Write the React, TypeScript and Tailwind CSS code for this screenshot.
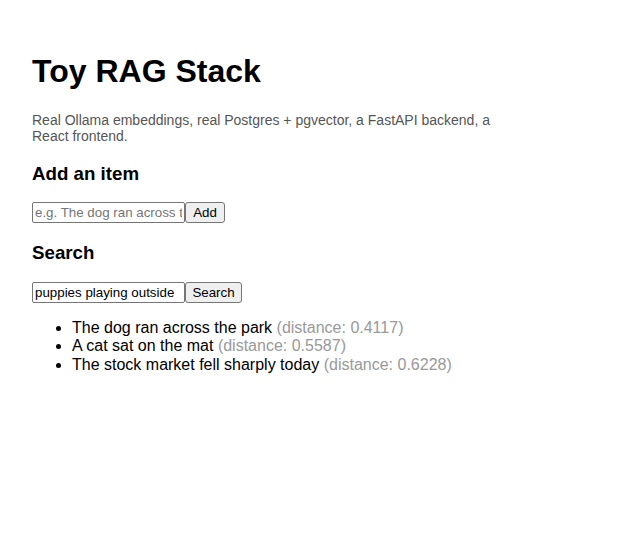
import { useState } from "react";

type Hit = { text: string; distance: number };

const results: Hit[] = [
  { text: "The dog ran across the park", distance: 0.4117 },
  { text: "A cat sat on the mat", distance: 0.5587 },
  { text: "The stock market fell sharply today", distance: 0.6228 },
];

export default function App() {
  const [item, setItem] = useState("");
  const [query, setQuery] = useState("puppies playing outside");

  const inputCls =
    "block w-[153px] h-[21px] px-[2px] border border-[#767676] rounded-[2px] bg-white text-[13.33px] text-black placeholder:text-[#757575] outline-none";
  const buttonCls =
    "block h-[21px] px-0 text-center border border-[#767676] rounded-[3px] bg-[#efefef] text-[13.33px] text-black";

  return (
    <div className="min-h-[560px] bg-white p-8 font-['Liberation_Sans',Arial,sans-serif] text-black">
      <div className="max-w-[480px]">
        <h1 className="mt-[21.44px] mb-[21.44px] text-[32px] leading-[36.8px] font-bold">Toy RAG Stack</h1>
        <p className="text-[14px] leading-[16.1px] text-[#555]">
          Real Ollama embeddings, real Postgres + pgvector, a FastAPI backend, a React frontend.
        </p>

        <h3 className="mt-[18.72px] mb-[17.72px] text-[18.72px] leading-[21.5px] font-bold">Add an item</h3>
        <div className="flex">
          <input
            className={inputCls}
            placeholder="e.g. The dog ran across the park"
            value={item}
            onChange={(e) => setItem(e.target.value)}
          />
          <button className={`${buttonCls} w-[40px]`}>Add</button>
        </div>

        <h3 className="mt-[18.72px] mb-[18.72px] text-[18.72px] leading-[21.5px] font-bold">Search</h3>
        <div className="flex">
          <input className={inputCls} value={query} onChange={(e) => setQuery(e.target.value)} />
          <button className={`${buttonCls} w-[57px]`}>Search</button>
        </div>

        <ul className="mt-4 list-disc pl-10 text-[16px] leading-[18.4px]">
          {results.map((r) => (
            <li key={r.text}>
              {r.text} <span className="text-[#999]">(distance: {r.distance.toFixed(4)})</span>
            </li>
          ))}
        </ul>
      </div>
    </div>
  );
}
